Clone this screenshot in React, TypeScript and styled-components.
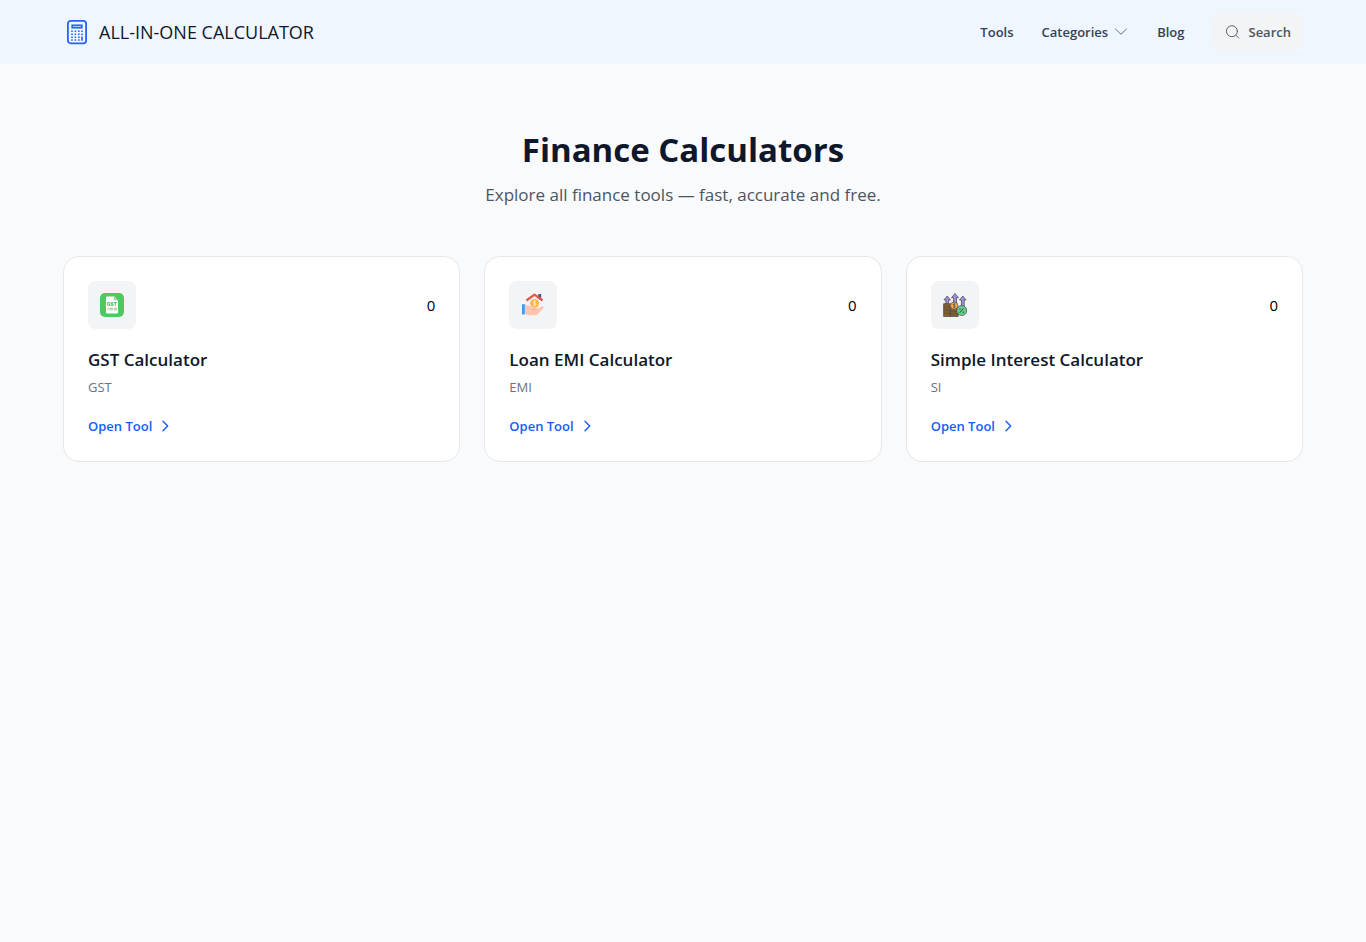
import React from "react";
import styled, { createGlobalStyle } from "styled-components";

const GlobalStyle = createGlobalStyle`
  *, *::before, *::after { box-sizing: border-box; }
  body {
    margin: 0;
    min-height: 100vh;
    background: #f9fafb;
    color: #000;
    font-family: "Segoe UI", "Open Sans", "Noto Sans", sans-serif;
    font-size: 15px;
    line-height: 24px;
  }
  h1, h2, p { margin: 0; }
  a { color: inherit; text-decoration: none; }
  svg { display: block; flex-shrink: 0; }
`;

const Header = styled.header`
  background: #eff6ff;
`;

const HeaderInner = styled.div`
  display: flex;
  align-items: center;
  justify-content: space-between;
  max-width: 1280px;
  height: 64px;
  margin: 0 auto;
  padding: 0 20px;
`;

const Brand = styled.a`
  display: flex;
  align-items: center;
  gap: 8px;
  color: #0f172a;
  font-size: 18px;
  font-weight: 500;
  line-height: 28px;
`;

const Nav = styled.nav`
  display: flex;
  align-items: center;
  gap: 28px;
  color: #374151;
  font-size: 13px;
  font-weight: 600;
  line-height: 20px;
`;

const MenuButton = styled.button`
  display: flex;
  align-items: center;
  gap: 5px;
  padding: 0;
  border: 0;
  background: none;
  color: inherit;
  font: inherit;
  cursor: pointer;
`;

const SearchButton = styled(MenuButton)`
  gap: 8px;
  padding: 8px 12px;
  border-radius: 6px;
  background: #f3f4f6;
  color: #4b5563;
`;

const Main = styled.main`
  max-width: 1280px;
  margin: 0 auto;
  padding: 64px 20px;
`;

const Intro = styled.section`
  margin-bottom: 48px;
  text-align: center;
`;

const Title = styled.h1`
  color: #0f172a;
  font-size: 33px;
  font-weight: 700;
  line-height: 44px;
`;

const Subtitle = styled.p`
  && { margin-top: 10px; }
  color: #4b5563;
  font-size: 17px;
  line-height: 26px;
`;

const Grid = styled.div`
  display: grid;
  grid-template-columns: repeat(auto-fit, minmax(300px, 1fr));
  gap: 24px;
`;

const Card = styled.article`
  padding: 24px;
  border: 1px solid #e5e7eb;
  border-radius: 16px;
  background: #fff;
`;

const CardTop = styled.div`
  display: flex;
  align-items: center;
  justify-content: space-between;
  margin-bottom: 16px;
`;

const IconTile = styled.div`
  display: grid;
  place-items: center;
  width: 48px;
  height: 48px;
  border-radius: 8px;
  background: #f3f4f6;
`;

const CardTitle = styled.h2`
  color: #0f172a;
  font-size: 17px;
  font-weight: 600;
  line-height: 30px;
`;

const CardText = styled.p`
  && { margin: 2px 0 18px; }
  color: #6b7280;
  font-size: 13px;
  line-height: 20px;
`;

const OpenLink = styled.a`
  display: flex;
  align-items: center;
  gap: 5px;
  width: fit-content;
  color: #155dfc;
  font-size: 13px;
  font-weight: 600;
  line-height: 22px;
`;

const LogoIcon = () => (
  <svg width="28" height="28" viewBox="0 0 28 28" fill="none" stroke="#2563ff" aria-hidden="true">
    <rect x="4.9" y="2.9" width="18.2" height="22.4" rx="2.8" strokeWidth="1.8" />
    <rect x="9.2" y="7.3" width="9.6" height="2.4" strokeWidth="1.7" />
    <path
      d="M8.2 13.2h1.6M11.6 13.2h1.6M15 13.2h1.6M18.2 13.2h1.6M8.2 16.2h1.6M11.6 16.2h1.6M15 16.2h1.6M18.2 16.2h1.6M8.2 19.2h1.6M11.6 19.2h1.6M15 19.2h1.6M8.2 22h1.6M11.6 22h1.6M15 22h1.6"
      strokeWidth="1.6"
    />
    <path d="M19 18.4v4.4" strokeWidth="1.6" />
  </svg>
);

const ChevronDown = () => (
  <svg width="16" height="16" viewBox="0 0 16 16" fill="none" stroke="#6b7280" strokeLinecap="round" strokeLinejoin="round" aria-hidden="true">
    <path d="M2.5 5 8 10.3 13.5 5" />
  </svg>
);

const SearchIcon = () => (
  <svg width="16" height="16" viewBox="0 0 16 16" fill="none" stroke="currentColor" strokeWidth=".9" strokeLinecap="round" aria-hidden="true">
    <circle cx="7.9" cy="7.2" r="5.5" />
    <path d="m11.9 11.2 2.9 2.9" />
  </svg>
);

const ChevronRight = () => (
  <svg width="16" height="16" viewBox="0 0 16 16" fill="none" stroke="currentColor" strokeWidth="1.4" strokeLinecap="round" strokeLinejoin="round" aria-hidden="true">
    <path d="m6 3.3 4.7 4.7L6 12.7" />
  </svg>
);

const GstIcon = () => (
  <svg width="24" height="24" viewBox="0 0 24 24" aria-hidden="true">
    <rect width="24" height="24" rx="5" fill="#50c761" />
    <path d="M6 4.5q0-1 1-1h7.5L18 7v12.5q0 1-1 1H7q-1 0-1-1z" fill="#fff" />
    <path d="M14.5 3.5V7H18z" fill="#a9e5ae" stroke="#50c761" strokeWidth=".5" />
    <g fill="none" stroke="#46b557" strokeWidth=".9">
      <path d="M9.9 9.6H7.7v2.8h2.2V11H9M13 9.6h-1.9V11H13v1.4h-2M13.8 9.6h3M15.3 9.6v3.2" />
      <path d="m7.6 17.4 1-2.8M10 17.5v-2.3h1.2v2.3m0-2.3h1.2v2.3M13.6 15.2h.9v2.3M15.3 17.3v-2.1h1.4v2.1" strokeWidth=".7" opacity=".75" />
    </g>
  </svg>
);

const LoanIcon = () => (
  <svg width="24" height="24" viewBox="0 0 24 24" aria-hidden="true">
    <path d="M17.2 1h3v6h-3z" fill="#5b5965" />
    <path d="m6.5 8.5 7-6 7 6V17h-14z" fill="#f4eff2" />
    <circle cx="13.6" cy="10.4" r="4.4" fill="#ffb547" />
    <path d="M15 8.7c-.7-.7-2.6-.6-2.6.6 0 1.4 2.6.7 2.6 2.1 0 1.2-2 1.3-2.8.5M13.6 7.4v6" fill="none" stroke="#fff0c9" strokeWidth=".9" />
    <path d="m5.4 7.5 8.1-5.8 8.1 5.8" fill="none" stroke="#df5656" strokeWidth="2.2" strokeLinejoin="round" />
    <path d="M4 12.8c3-1.4 5.3.4 7.2 1.7h3.2c1.4 0 1.6 1.8.3 2.2H11l4.2.2 5.8-3.6c1.6-.6 2.3 1 1.2 2L17 21c-1 .9-2.2 1.2-3.6 1.2H9c-2 0-3-.7-5-1.2z" fill="#ffc4ad" />
    <path d="M10.5 16.8h4.3l2.4-1.3" fill="none" stroke="#efa18c" strokeWidth=".7" />
    <path d="M1 11.2h3v10.2H1z" fill="#4299ed" />
    <path d="M3.7 11.6H5v9.5H3.7z" fill="#b4d8ff" />
  </svg>
);

const InterestIcon = () => (
  <svg width="24" height="24" viewBox="0 0 24 24" stroke="#454450" strokeWidth=".7" strokeLinejoin="round" aria-hidden="true">
    <g fill="#9b91d8">
      <path d="m4.2 3-3.3 4h1.9v4.4h2.8V7h1.9z" />
      <path d="M12 .5 8.5 4.7h2V11h3V4.7h2z" />
      <path d="m19.8 3-3.3 4h1.9v7.2h2.8V7h1.9z" />
    </g>
    <g fill="#80602f">
      <path d="M.6 10.7h6.8v12.8H.6z" />
      <path d="M7.4 15.6h7.8v7.9H7.4z" />
    </g>
    <path d="M.6 13.9h6.8M.6 17.1h6.8M.6 20.3h6.8M7.4 18.2h7.8M7.4 20.9h7.8" strokeWidth=".5" />
    <circle cx="11.2" cy="12.7" r="3.7" fill="#f6b34a" />
    <path d="M12.4 11.3c-.6-.6-2.3-.5-2.3.5 0 1.2 2.3.6 2.3 1.9 0 1-1.7 1.2-2.4.4M11.2 10.2v5.2" fill="none" />
    <circle cx="18.7" cy="17.5" r="5" fill="#62cf89" />
    <path d="m16.6 19.8 4-4.4M16.2 16.1h1.5M19.6 19.2h1.5" fill="none" strokeWidth="1" />
  </svg>
);

const tools = [
  { name: "GST Calculator", text: "GST", count: 0, Icon: GstIcon },
  { name: "Loan EMI Calculator", text: "EMI", count: 0, Icon: LoanIcon },
  { name: "Simple Interest Calculator", text: "SI", count: 0, Icon: InterestIcon },
];

export default function App() {
  return (
    <>
      <GlobalStyle />
      <Header>
        <HeaderInner>
          <Brand href="#">
            <LogoIcon />
            ALL-IN-ONE CALCULATOR
          </Brand>
          <Nav>
            <a href="#tools">Tools</a>
            <MenuButton type="button">
              Categories
              <ChevronDown />
            </MenuButton>
            <a href="#blog">Blog</a>
            <SearchButton type="button">
              <SearchIcon />
              Search
            </SearchButton>
          </Nav>
        </HeaderInner>
      </Header>
      <Main>
        <Intro>
          <Title>Finance Calculators</Title>
          <Subtitle>Explore all finance tools — fast, accurate and free.</Subtitle>
        </Intro>
        <Grid>
          {tools.map(({ name, text, count, Icon }) => (
            <Card key={name}>
              <CardTop>
                <IconTile>
                  <Icon />
                </IconTile>
                <span>{count}</span>
              </CardTop>
              <CardTitle>{name}</CardTitle>
              <CardText>{text}</CardText>
              <OpenLink href="#tool">
                Open Tool
                <ChevronRight />
              </OpenLink>
            </Card>
          ))}
        </Grid>
      </Main>
    </>
  );
}
